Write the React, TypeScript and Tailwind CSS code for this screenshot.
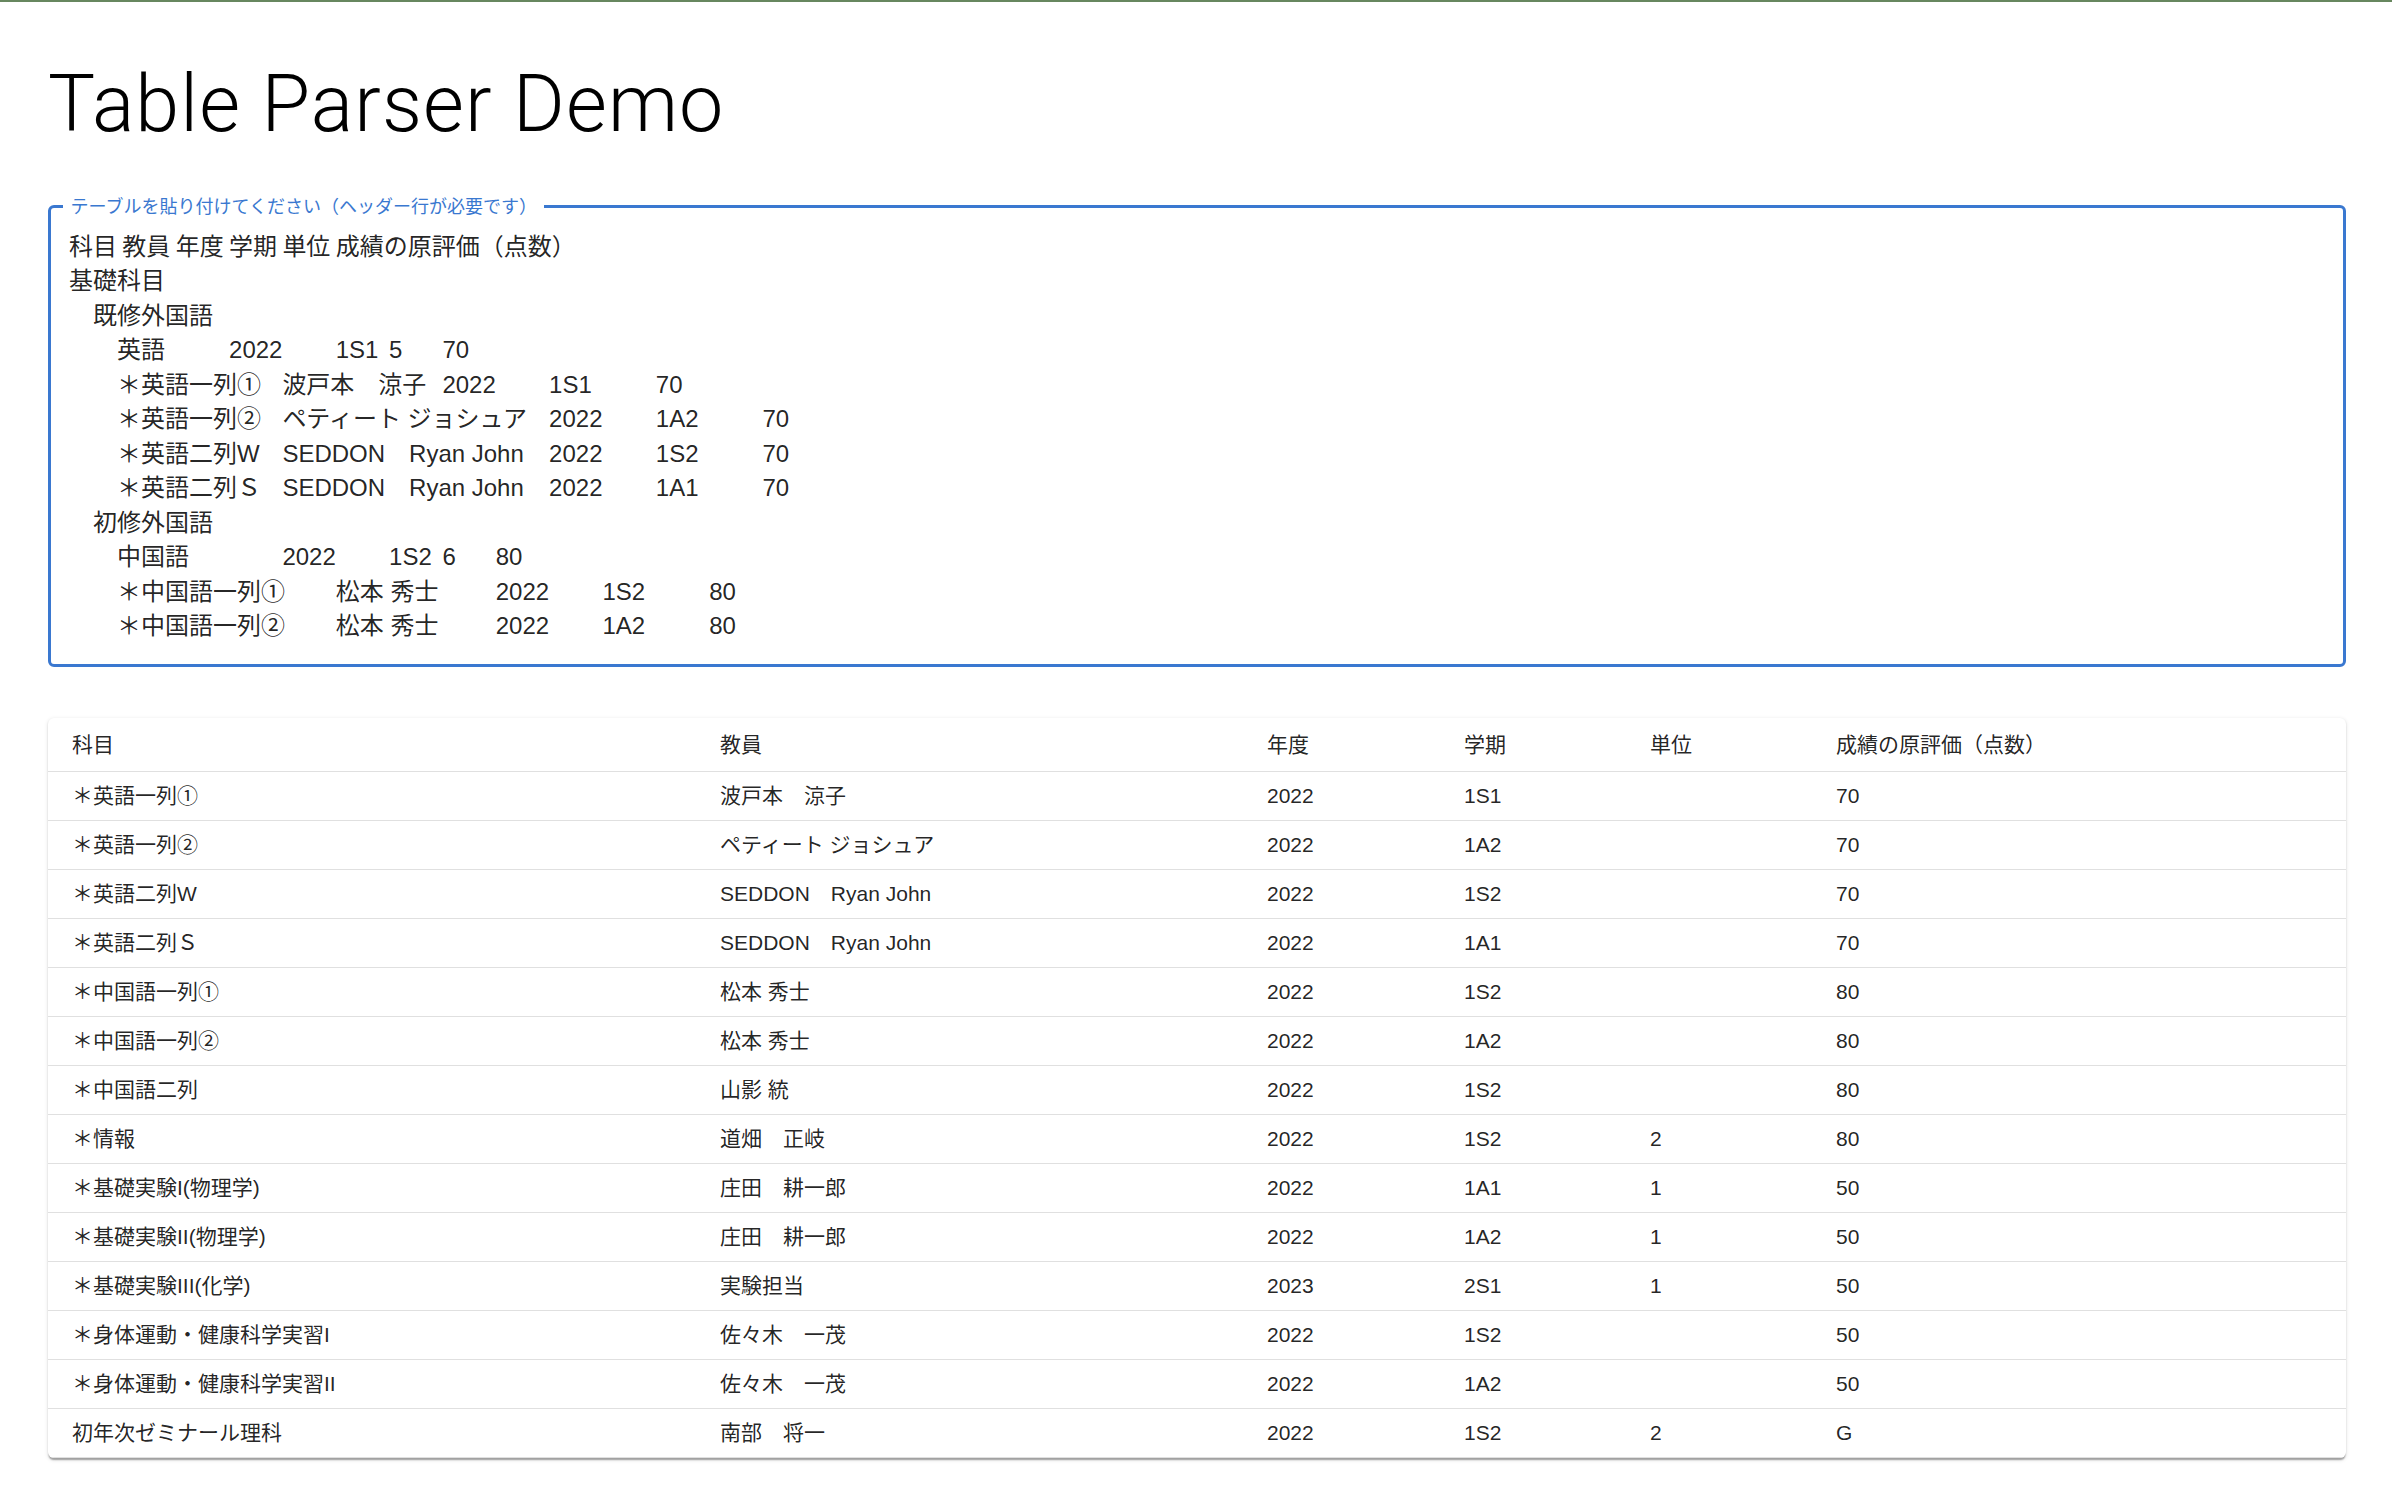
import React from "react";

const pasted = [
  "科目\t教員\t年度\t学期\t単位\t成績の原評価（点数）",
  "基礎科目",
  "　既修外国語",
  "　　英語\t\t2022\t1S1\t5\t70",
  "　　＊英語一列①\t波戸本　涼子\t2022\t1S1\t\t70",
  "　　＊英語一列②\tペティート ジョシュア\t2022\t1A2\t\t70",
  "　　＊英語二列W\tSEDDON　Ryan John\t2022\t1S2\t\t70",
  "　　＊英語二列Ｓ\tSEDDON　Ryan John\t2022\t1A1\t\t70",
  "　初修外国語",
  "　　中国語\t\t2022\t1S2\t6\t80",
  "　　＊中国語一列①\t松本 秀士\t\t2022\t1S2\t\t80",
  "　　＊中国語一列②\t松本 秀士\t\t2022\t1A2\t\t80",
].join("\n");

const headers = ["科目", "教員", "年度", "学期", "単位", "成績の原評価（点数）"];

const rows: string[][] = [
  ["＊英語一列①", "波戸本　涼子", "2022", "1S1", "", "70"],
  ["＊英語一列②", "ペティート ジョシュア", "2022", "1A2", "", "70"],
  ["＊英語二列W", "SEDDON　Ryan John", "2022", "1S2", "", "70"],
  ["＊英語二列Ｓ", "SEDDON　Ryan John", "2022", "1A1", "", "70"],
  ["＊中国語一列①", "松本 秀士", "2022", "1S2", "", "80"],
  ["＊中国語一列②", "松本 秀士", "2022", "1A2", "", "80"],
  ["＊中国語二列", "山影 統", "2022", "1S2", "", "80"],
  ["＊情報", "道畑　正岐", "2022", "1S2", "2", "80"],
  ["＊基礎実験I(物理学)", "庄田　耕一郎", "2022", "1A1", "1", "50"],
  ["＊基礎実験II(物理学)", "庄田　耕一郎", "2022", "1A2", "1", "50"],
  ["＊基礎実験III(化学)", "実験担当", "2023", "2S1", "1", "50"],
  ["＊身体運動・健康科学実習I", "佐々木　一茂", "2022", "1S2", "", "50"],
  ["＊身体運動・健康科学実習II", "佐々木　一茂", "2022", "1A2", "", "50"],
  ["初年次ゼミナール理科", "南部　将一", "2022", "1S2", "2", "G"],
];

const font = "font-['Liberation_Sans','Noto_Sans_CJK_JP',sans-serif]";

export default function App() {
  return (
    <div className={`min-h-screen bg-white border-t-2 border-[#67875f] ${font}`}>
      <div className="pl-12 pr-[46px]">
        <h1 className="mt-[63px] font-['Roboto','Liberation_Sans',sans-serif] text-[79px] leading-[78px] tracking-[1.1px] font-light text-black">
          Table Parser Demo
        </h1>

        <fieldset className="mt-[54.5px] border-[3px] border-[#3a78d0] rounded-[6px] px-3 pb-[20.5px]">
          <legend className="px-[7.5px] text-[18px] leading-[18px] text-[#3a78d0]">
            テーブルを貼り付けてください（ヘッダー行が必要です）
          </legend>
          <div className="pl-[6px] pt-[14px] whitespace-pre [tab-size:8] text-[24px] leading-[34.5px] text-[rgba(0,0,0,0.87)]">
            {pasted}
          </div>
        </fieldset>

        <div className="mt-[51px] rounded-[6px] bg-white overflow-hidden shadow-[0_3px_1.5px_-1.5px_rgba(0,0,0,0.2),0_1.5px_1.5px_0_rgba(0,0,0,0.14),0_1.5px_4.5px_0_rgba(0,0,0,0.12)] text-[21px] text-[rgba(0,0,0,0.87)]">
          <div className="grid grid-cols-[648px_547px_197px_186px_186px_1fr] h-[54px] items-center border-b border-[#e0e0e0]">
            {headers.map((h) => (
              <div key={h} className="pl-6 whitespace-nowrap">
                {h}
              </div>
            ))}
          </div>
          {rows.map((r, i) => (
            <div
              key={i}
              className="grid grid-cols-[648px_547px_197px_186px_186px_1fr] h-[49px] items-center border-b border-[#e0e0e0]"
            >
              {r.map((c, j) => (
                <div key={j} className="pl-6 whitespace-nowrap">
                  {c}
                </div>
              ))}
            </div>
          ))}
        </div>
      </div>
    </div>
  );
}
